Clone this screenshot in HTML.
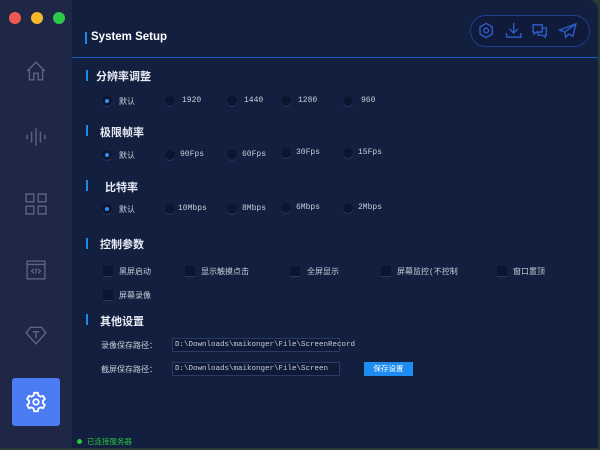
<!DOCTYPE html>
<html><head><meta charset="utf-8"><style>
*{margin:0;padding:0;box-sizing:border-box}
body{width:600px;height:450px;background:#2a3a3a;overflow:hidden;font-family:"Liberation Sans","Noto Sans CJK SC",sans-serif;position:relative}
.win{position:absolute;left:0;top:0;width:598px;height:448px;background:#131f3f;border-radius:0 10px 0 0;overflow:hidden}
.side{position:absolute;left:0;top:0;width:72px;height:448px;background:#1e2745}
.dot{position:absolute;top:12px;width:12px;height:12px;border-radius:50%}
.a{position:absolute}
.hdr{position:absolute;left:72px;top:57px;width:530px;height:1px;background:#1a5ac0}
.bar{position:absolute;width:2px;height:11px;background:#1e88e5}
.sec{position:absolute;color:#e8ecf5;font-size:11px;font-weight:bold}
.r{position:absolute;width:10px;height:10px;border-radius:50%;background:#0c1530;box-shadow:0 1px 0 #2a3760}
.r.on::after{content:"";position:absolute;left:3px;top:3px;width:4px;height:4px;border-radius:50%;background:#2f8df5}
.l{position:absolute;color:#c7ccd8;font-size:8px;font-family:"Liberation Mono","Noto Sans CJK SC",monospace}
.c{position:absolute;width:10px;height:10px;background:#0b1430;box-shadow:0 1px 0 #2a3760}
.in{position:absolute;left:172px;width:168px;height:14px;border:1px solid #2b3a60;background:#0f1a38;color:#c7ccd8;font-size:7.5px;font-family:"Liberation Mono",monospace;padding:2px 2px;line-height:9px}
</style></head><body>
<div class="win">
<div class="side">
<div class="dot" style="left:9px;background:#f05a50"></div>
<div class="dot" style="left:31px;background:#f6b92b"></div>
<div class="dot" style="left:53px;background:#2dc84a"></div>
<svg class="a" style="left:25px;top:60px" width="22" height="22" viewBox="0 0 20 20" fill="none" stroke="#5c6580" stroke-width="1.3"><path d="M2 10L10 2L18 10M4 8V18H8V12H12V18H16V8"/></svg>
<svg class="a" style="left:25px;top:126px" width="22" height="22" viewBox="0 0 20 20" fill="none" stroke="#5c6580" stroke-width="1.3"><path d="M2 8v4M6 5v10M10 2v16M14 5v10M18 8v4"/></svg>
<svg class="a" style="left:25px;top:193px" width="22" height="22" viewBox="0 0 20 20" fill="none" stroke="#5c6580" stroke-width="1.3"><rect x="1" y="1" width="7" height="7"/><rect x="12" y="1" width="7" height="7"/><rect x="1" y="12" width="7" height="7"/><rect x="12" y="12" width="7" height="7"/></svg>
<svg class="a" style="left:26px;top:260px" width="20" height="20" viewBox="0 0 18 18" fill="none" stroke="#5c6580" stroke-width="1.2"><rect x="1" y="1" width="16" height="16"/><path d="M1 4h16M7 8l-2 2 2 2M11 8l2 2-2 2M9.5 7.5l-1 5"/></svg>
<svg class="a" style="left:25px;top:325px" width="22" height="20" viewBox="0 0 20 18" fill="none" stroke="#5c6580" stroke-width="1.3"><path d="M5 2h10l4 5-9 10L1 7z"/><path d="M7 6h6M10 6v6"/></svg>
<div class="a" style="left:12px;top:378px;width:48px;height:48px;background:#4b7cf3;border-radius:3px"></div>
<svg class="a" style="left:25px;top:391px" width="22" height="22" viewBox="0 0 24 24" fill="none" stroke="#fff" stroke-width="2"><circle cx="12" cy="12" r="3"/><path d="M10 2h4l.6 2.8 2.4 1.4 2.7-.9 2 3.4-2.1 1.9v2.8l2.1 1.9-2 3.4-2.7-.9-2.4 1.4L14 22h-4l-.6-2.8-2.4-1.4-2.7.9-2-3.4 2.1-1.9v-2.8L2.3 8.7l2-3.4 2.7.9 2.4-1.4z"/></svg>
</div>
<div class="bar" style="left:85px;top:32px;height:12px"></div>
<div class="a" style="left:91px;top:31px;color:#fff;font-size:11.5px;font-weight:bold">System Setup</div>
<div class="a" style="left:470px;top:15px;width:120px;height:32px;border:1px solid #1e3f8a;border-radius:16px;background:#101a3a"></div>
<svg class="a" style="left:479px;top:21px" width="102" height="20" viewBox="0 0 100 18" fill="none" stroke="#2c5cc6" stroke-width="1.4"><path d="M7 1.5l6 3.5v7l-6 3.5-6-3.5v-7z"/><circle cx="7" cy="8.5" r="2.3"/><path d="M34 1v10M30 7l4 4 4-4M27 11v4h14v-4"/><path d="M53 3h9v7h-5l-3 2v-2h-1zM62 6h4v7h-1v2l-3-2h-4v-3"/><path d="M95 2L79 8l5 2 1 5 3-3 4 2zM84 10l11-8"/></svg>
<div class="hdr"></div>

<div class="bar" style="left:86px;top:70px"></div><div class="sec" style="left:96px;top:68px">分辨率调整</div>
<div class="r on" style="left:102px;top:96px"></div><div class="l" style="left:119px;top:96px">默认</div>
<div class="r" style="left:165px;top:96px"></div><div class="l" style="left:182px;top:96px">1920</div>
<div class="r" style="left:227px;top:96px"></div><div class="l" style="left:244px;top:96px">1440</div>
<div class="r" style="left:281px;top:96px"></div><div class="l" style="left:298px;top:96px">1280</div>
<div class="r" style="left:343px;top:96px"></div><div class="l" style="left:361px;top:96px">960</div>

<div class="bar" style="left:86px;top:125px"></div><div class="sec" style="left:100px;top:124px">极限帧率</div>
<div class="r on" style="left:102px;top:150px"></div><div class="l" style="left:119px;top:150px">默认</div>
<div class="r" style="left:165px;top:150px"></div><div class="l" style="left:180px;top:150px">90Fps</div>
<div class="r" style="left:227px;top:150px"></div><div class="l" style="left:242px;top:150px">60Fps</div>
<div class="r" style="left:281px;top:148px"></div><div class="l" style="left:296px;top:148px">30Fps</div>
<div class="r" style="left:343px;top:148px"></div><div class="l" style="left:358px;top:148px">15Fps</div>

<div class="bar" style="left:86px;top:180px"></div><div class="sec" style="left:105px;top:179px">比特率</div>
<div class="r on" style="left:102px;top:204px"></div><div class="l" style="left:119px;top:204px">默认</div>
<div class="r" style="left:165px;top:204px"></div><div class="l" style="left:178px;top:204px">10Mbps</div>
<div class="r" style="left:227px;top:204px"></div><div class="l" style="left:242px;top:204px">8Mbps</div>
<div class="r" style="left:281px;top:203px"></div><div class="l" style="left:296px;top:203px">6Mbps</div>
<div class="r" style="left:343px;top:203px"></div><div class="l" style="left:358px;top:203px">2Mbps</div>

<div class="bar" style="left:86px;top:238px"></div><div class="sec" style="left:100px;top:236px">控制参数</div>
<div class="c" style="left:103px;top:266px"></div><div class="l" style="left:119px;top:266px">黑屏启动</div>
<div class="c" style="left:185px;top:266px"></div><div class="l" style="left:201px;top:266px">显示触摸点击</div>
<div class="c" style="left:290px;top:266px"></div><div class="l" style="left:307px;top:266px">全屏显示</div>
<div class="c" style="left:381px;top:266px"></div><div class="l" style="left:397px;top:266px">屏幕监控(不控制</div>
<div class="c" style="left:497px;top:266px"></div><div class="l" style="left:513px;top:266px">窗口置顶</div>
<div class="c" style="left:103px;top:290px"></div><div class="l" style="left:119px;top:290px">屏幕录像</div>

<div class="bar" style="left:86px;top:314px"></div><div class="sec" style="left:100px;top:313px">其他设置</div>
<div class="l" style="left:101px;top:340px">录像保存路径：</div>
<div class="in" style="top:338px">D:\Downloads\maikonger\File\ScreenRecord</div>
<div class="l" style="left:101px;top:364px">截屏保存路径：</div>
<div class="in" style="top:362px">D:\Downloads\maikonger\File\Screen</div>
<div class="a" style="left:364px;top:362px;width:49px;height:14px;background:#1e8cf0;color:#fff;font-size:7.5px;text-align:center;line-height:14px">保存设置</div>

<div class="a" style="left:77px;top:439px;width:5px;height:5px;border-radius:50%;background:#2bc33e"></div>
<div class="a" style="left:87px;top:436px;color:#2bc33e;font-size:7.5px">已连接服务器</div>
</div>
</body></html>
